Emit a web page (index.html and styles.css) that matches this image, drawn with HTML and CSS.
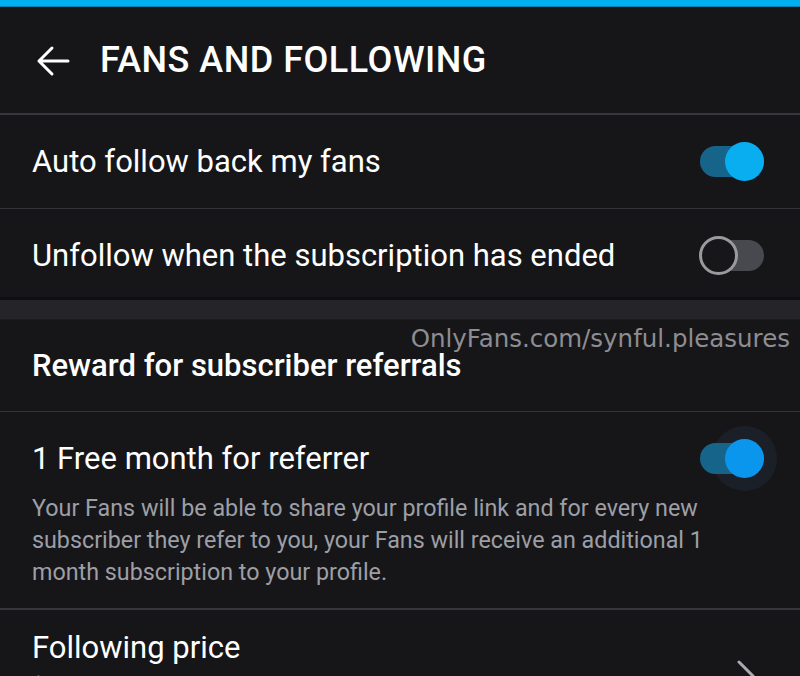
FILE: index.html
```html
<!DOCTYPE html>
<html>
<head>
<meta charset="utf-8">
<link rel="stylesheet" href="styles.css">
</head>
<body>
<div class="topbar"></div>
<header class="header">
  <svg class="back" width="34" height="32" viewBox="0 0 34 32"><path d="M32 16H3M16 3L3 16l13 13" fill="none" stroke="#fff" stroke-width="3" stroke-linecap="round" stroke-linejoin="round"/></svg>
  <h1 class="title">FANS AND FOLLOWING</h1>
</header>
<div class="row">
  <span class="label">Auto follow back my fans</span>
  <span class="toggle on"><span class="knob"></span></span>
</div>
<div class="row last">
  <span class="label">Unfollow when the subscription has ended</span>
  <span class="toggle off"><span class="knob"></span></span>
</div>
<div class="band"></div>
<div class="row section">
  <span class="label bold">Reward for subscriber referrals</span>
  <span class="watermark">OnlyFans.com/synful.pleasures</span>
</div>
<div class="row tall">
  <div class="tall-head">
    <span class="label">1 Free month for referrer</span>
    <span class="toggle on halo"><span class="knob"></span></span>
  </div>
  <p class="desc">Your Fans will be able to share your profile link and for every new subscriber they refer to you, your Fans will receive an additional 1 month subscription to your profile.</p>
</div>
<div class="row price">
  <div class="price-text">
    <span class="label">Following price</span>
    <span class="sub">$</span>
  </div>
  <svg class="chev" width="20" height="34" viewBox="0 0 20 34"><path d="M3 3l14 14L3 31" fill="none" stroke="#a9abb2" stroke-width="3" stroke-linecap="round" stroke-linejoin="round"/></svg>
</div>
</body>
</html>
```
FILE: styles.css
```css
html, body { margin: 0; padding: 0; }
body {
  background: #161619;
  color: #fff;
  font-family: Roboto, "Noto Sans", sans-serif;
  width: 800px;
  height: 676px;
  overflow: hidden;
}
.topbar {
  height: 6px;
  background: #00aff0;
  border-bottom: 1px solid #0b7fb0;
}
.header {
  height: 106px;
  display: flex;
  align-items: center;
  padding-left: 36px;
  border-bottom: 2px solid #38383c;
}
.back { margin-top: 2px; }
.title {
  margin: 0 0 0 30px;
  font-size: 36px;
  font-weight: 500;
  letter-spacing: 0.5px;
}
.row {
  display: flex;
  align-items: center;
  justify-content: space-between;
  height: 93px;
  padding: 0 36px 0 32px;
  border-bottom: 1px solid #333337;
  position: relative;
}
.row.last { height: 84px; padding-top: 4px; border-bottom: 3px solid #0f0f12; }
.band { height: 19px; background: #252529; border-bottom: 1px solid #1c1c20; }
.label {
  font-size: 31px;
  white-space: nowrap;
}
.bold { font-weight: 500; }
.row.section { height: 91px; }
.watermark {
  position: absolute;
  right: 10px;
  top: 4px;
  font-family: "DejaVu Sans", sans-serif;
  font-size: 24.5px;
  color: #8d8d92;
  white-space: nowrap;
}
.toggle {
  position: relative;
  width: 64px;
  height: 31px;
  border-radius: 16px;
  flex: none;
}
.toggle.on { background: #17648a; }
.toggle.off { background: #48494e; }
.knob {
  position: absolute;
  top: -4px;
  width: 39px;
  height: 39px;
  border-radius: 50%;
  box-sizing: border-box;
}
.on .knob { right: 0; background: #08aef0; }
.off .knob { left: -1px; background: #17171a; border: 3px solid #9a9a9e; }
.halo .knob { background: #0a96ec; }
.halo::before {
  content: "";
  position: absolute;
  z-index: -1;
  right: -13px;
  top: -17px;
  width: 65px;
  height: 65px;
  border-radius: 50%;
  background: #1b1f27;
}
.row.tall {
  height: 196px;
  flex-direction: column;
  align-items: stretch;
  justify-content: flex-start;
  border-bottom: 2px solid #37373b;
}
.tall-head {
  display: flex;
  align-items: center;
  justify-content: space-between;
  height: 92px;
}
.desc {
  margin: -12px 0 0;
  font-size: 23.3px;
  line-height: 32px;
  color: #9d9fa6;
  width: 712px;
}
.row.price { border-bottom: none; align-items: flex-start; padding-top: 19px; height: auto; }
.price-text { display: flex; flex-direction: column; }
.sub { font-size: 22px; color: #9d9fa6; margin-top: 8px; }
.chev { margin-top: 30px; margin-right: 8px; }
```
